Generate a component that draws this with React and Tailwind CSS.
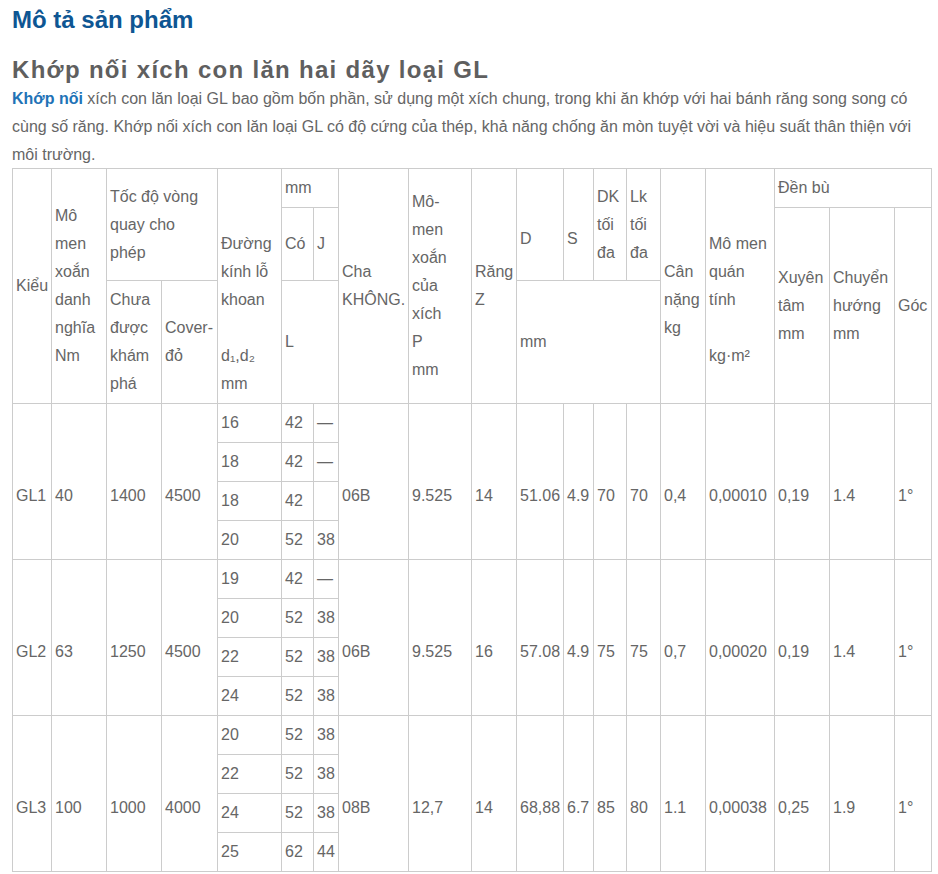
const font = { fontFamily: '"Liberation Sans", Arial, sans-serif' };

const cell = "border border-[#cccccc] px-[3px] py-[5px] align-middle text-left font-normal";
// the merged body cells sit a line lower than centre, as in the source page
const tall = "border border-[#cccccc] px-[3px] pt-[33px] pb-[5px] align-middle text-left";

const widths = [39, 55, 55, 56, 64, 32, 25, 70, 63, 45, 47, 30, 33, 34, 45, 69, 55, 65, 37];

const groups = [
  {
    kieu: "GL1",
    nm: "40",
    rpm1: "1400",
    rpm2: "4500",
    bores: [
      ["16", "42", "—"],
      ["18", "42", "—"],
      ["18", "42", ""],
      ["20", "52", "38"],
    ],
    chain: "06B",
    p: "9.525",
    z: "14",
    d: "51.06",
    s: "4.9",
    dk: "70",
    lk: "70",
    kg: "0,4",
    inertia: "0,00010",
    radial: "0,19",
    axial: "1.4",
    angle: "1°",
  },
  {
    kieu: "GL2",
    nm: "63",
    rpm1: "1250",
    rpm2: "4500",
    bores: [
      ["19", "42", "—"],
      ["20", "52", "38"],
      ["22", "52", "38"],
      ["24", "52", "38"],
    ],
    chain: "06B",
    p: "9.525",
    z: "16",
    d: "57.08",
    s: "4.9",
    dk: "75",
    lk: "75",
    kg: "0,7",
    inertia: "0,00020",
    radial: "0,19",
    axial: "1.4",
    angle: "1°",
  },
  {
    kieu: "GL3",
    nm: "100",
    rpm1: "1000",
    rpm2: "4000",
    bores: [
      ["20", "52", "38"],
      ["22", "52", "38"],
      ["24", "52", "38"],
      ["25", "62", "44"],
    ],
    chain: "08B",
    p: "12,7",
    z: "14",
    d: "68,88",
    s: "6.7",
    dk: "85",
    lk: "80",
    kg: "1.1",
    inertia: "0,00038",
    radial: "0,25",
    axial: "1.9",
    angle: "1°",
  },
];

const GroupRows = ({ g }) => {
  return g.bores.map((b, i) => (
    <tr key={i} className="h-[39px]">
      {i === 0 && (
        <>
          <td rowSpan={4} className={tall}>{g.kieu}</td>
          <td rowSpan={4} className={tall}>{g.nm}</td>
          <td rowSpan={4} className={tall}>{g.rpm1}</td>
          <td rowSpan={4} className={tall}>{g.rpm2}</td>
        </>
      )}
      <td className={cell}>{b[0]}</td>
      <td className={cell}>{b[1]}</td>
      <td className={cell}>{b[2]}</td>
      {i === 0 && (
        <>
          <td rowSpan={4} className={tall}>{g.chain}</td>
          <td rowSpan={4} className={tall}>{g.p}</td>
          <td rowSpan={4} className={tall}>{g.z}</td>
          <td rowSpan={4} className={tall}>{g.d}</td>
          <td rowSpan={4} className={tall}>{g.s}</td>
          <td rowSpan={4} className={tall}>{g.dk}</td>
          <td rowSpan={4} className={tall}>{g.lk}</td>
          <td rowSpan={4} className={tall}>{g.kg}</td>
          <td rowSpan={4} className={tall}>{g.inertia}</td>
          <td rowSpan={4} className={tall}>{g.radial}</td>
          <td rowSpan={4} className={tall}>{g.axial}</td>
          <td rowSpan={4} className={tall}>{g.angle}</td>
        </>
      )}
    </tr>
  ));
};

const App = () => {
  return (
    <div className="min-h-[874px] bg-white px-[12px] text-[#666666]" style={font}>
      <h2 className="pt-[6px] text-[24px] font-bold leading-[28px] text-[#0e5693]">
        Mô tả sản phẩm
      </h2>

      <h3 className="mt-[21px] text-[24px] font-bold leading-[30px] tracking-[1.3px] text-[#5f5f5f]">
        Khớp nối xích con lăn hai dãy loại GL
      </h3>

      <p className="w-[919px] text-[16px] leading-[28px]">
        <a className="font-bold text-[#1f73b7]">Khớp nối</a> xích con lăn loại GL bao gồm bốn
        phần, sử dụng một xích chung, trong khi ăn khớp với hai bánh răng song song có cùng số
        răng. Khớp nối xích con lăn loại GL có độ cứng của thép, khả năng chống ăn mòn tuyệt vời
        và hiệu suất thân thiện với môi trường.
      </p>

      <table className="-mt-[1px] w-[919px] table-fixed border-collapse text-[16px] leading-[28px] text-[#666666]">
        <colgroup>
          {widths.map((w, i) => (
            <col key={i} style={{ width: w }} />
          ))}
        </colgroup>
        <thead>
          <tr className="h-[39px]">
            <th rowSpan={3} className={cell}>Kiểu</th>
            <th rowSpan={3} className={cell}>
              Mô<br />men<br />xoắn<br />danh<br />nghĩa<br />Nm
            </th>
            <th rowSpan={2} colSpan={2} className={cell}>
              Tốc độ vòng<br />quay cho<br />phép
            </th>
            <th rowSpan={3} className={`${cell} pt-[60px]`}>
              Đường<br />kính lỗ<br />khoan<br />
              <br />d₁,d₂<br />mm
            </th>
            <th colSpan={2} className={cell}>mm</th>
            <th rowSpan={3} className={cell}>
              Cha<br />KHÔNG.
            </th>
            <th rowSpan={3} className={cell}>
              Mô-<br />men<br />xoắn<br />của<br />xích<br />P<br />mm
            </th>
            <th rowSpan={3} className={cell}>
              Răng<br />Z
            </th>
            <th rowSpan={2} className={`${cell} pt-[33px]`}>D</th>
            <th rowSpan={2} className={`${cell} pt-[33px]`}>S</th>
            <th rowSpan={2} className={cell}>
              DK<br />tối<br />đa
            </th>
            <th rowSpan={2} className={cell}>
              Lk<br />tối<br />đa
            </th>
            <th rowSpan={3} className={`${cell} pt-[33px]`}>
              Cân<br />nặng<br />kg
            </th>
            <th rowSpan={3} className={`${cell} pt-[32px]`}>
              Mô men<br />quán<br />tính<br />
              <br />kg·m²
            </th>
            <th colSpan={3} className={cell}>Đền bù</th>
          </tr>
          <tr className="h-[73px]">
            <th className={cell}>Có</th>
            <th className={cell}>J</th>
            <th rowSpan={2} className={cell}>
              Xuyên<br />tâm<br />mm
            </th>
            <th rowSpan={2} className={cell}>
              Chuyển<br />hướng<br />mm
            </th>
            <th rowSpan={2} className={cell}>Góc</th>
          </tr>
          <tr className="h-[123px]">
            <th className={cell}>
              Chưa<br />được<br />khám<br />phá
            </th>
            <th className={cell}>
              Cover-<br />đỏ
            </th>
            <th colSpan={2} className={cell}>L</th>
            <th colSpan={4} className={cell}>mm</th>
          </tr>
        </thead>
        <tbody>
          {groups.map((g) => (
            <GroupRows key={g.kieu} g={g} />
          ))}
        </tbody>
      </table>
    </div>
  );
};

export default App;
